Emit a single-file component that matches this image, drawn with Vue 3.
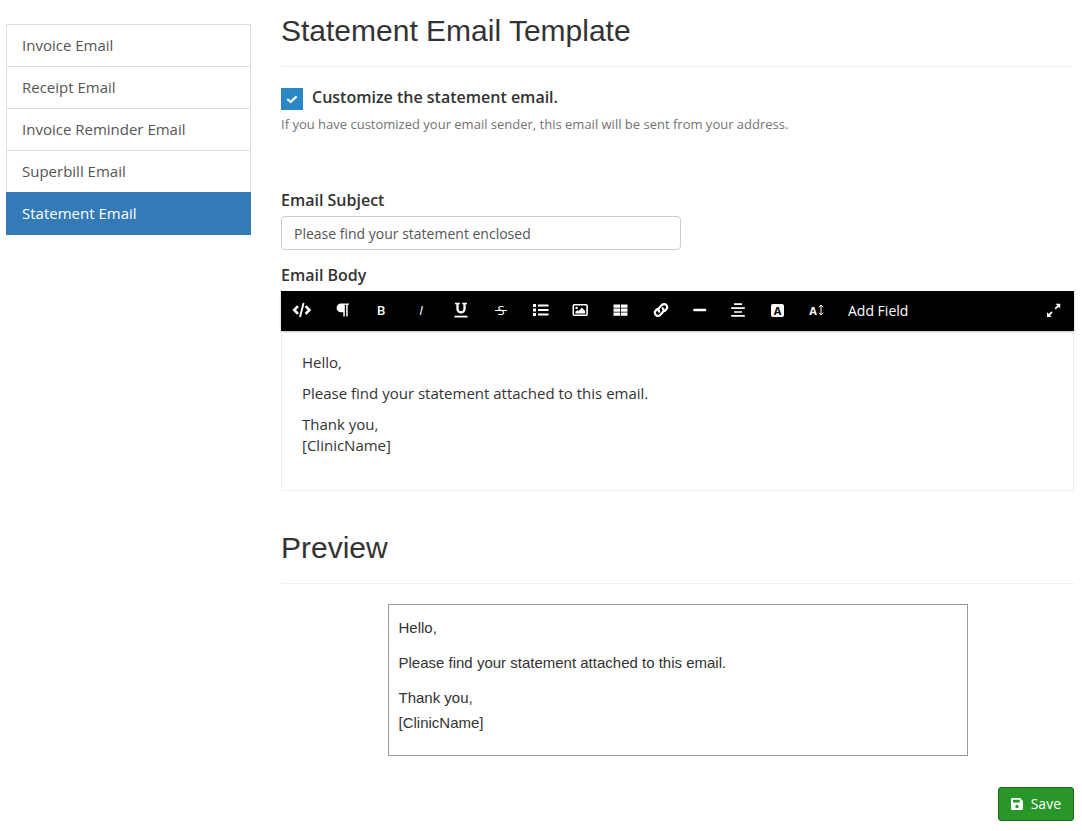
<script setup>
import { ref } from 'vue'

const templates = [
  'Invoice Email',
  'Receipt Email',
  'Invoice Reminder Email',
  'Superbill Email',
  'Statement Email',
]
const active = ref('Statement Email')
const customize = ref(true)
const subject = ref('Please find your statement enclosed')
</script>

<template>
  <div class="page">
    <nav class="sidebar" aria-label="Email templates">
      <a
        v-for="name in templates"
        :key="name"
        href="#"
        class="item"
        :class="{ active: name === active }"
        @click.prevent="active = name"
      >{{ name }}</a>
    </nav>

    <main class="content">
      <h1 class="title">Statement Email Template</h1>

      <div class="check-row">
        <input id="customize" v-model="customize" type="checkbox" class="check" />
        <svg class="tick" viewBox="0 0 22 22" aria-hidden="true">
          <path d="M6.300 11l3.300 3 6-5.600" fill="none" stroke="#fff" stroke-width="2.200" />
        </svg>
        <label for="customize" class="label">Customize the statement email.</label>
      </div>
      <p class="help">If you have customized your email sender, this email will be sent from your address.</p>

      <label for="subject" class="label field-label">Email Subject</label>
      <input id="subject" v-model="subject" type="text" class="text-input" />

      <div id="body-label" class="label field-label body-label">Email Body</div>
      <div class="editor">
        <div class="toolbar" role="toolbar" aria-label="Formatting">
          <button type="button" class="tool" aria-label="HTML">
            <svg viewBox="0 0 20 16"><path d="M7 4.200L3.200 8 7 11.800M14.600 4.200L18.400 8l-3.800 3.800" fill="none" stroke="#fff" stroke-width="2.600" /><path d="M12.600 1L9 15" stroke="#fff" stroke-width="1.900" /></svg>
          </button>
          <button type="button" class="tool" aria-label="Paragraph format">
            <svg viewBox="0 0 20 16"><path d="M10 1.500h8v1.300h-1.300V14.500h-1.500V2.800h-1.400V14.500h-1.500V10.300H10a4.400 4.400 0 0 1 0-8.800z" fill="#fff" /></svg>
          </button>
          <button type="button" class="tool bold">B</button>
          <button type="button" class="tool italic">I</button>
          <button type="button" class="tool" aria-label="Underline">
            <svg viewBox="0 0 20 16"><path d="M4 1.500h4.800M11.200 1.500H16" stroke="#fff" stroke-width="1.700" /><path d="M6.500 1.500v5.400a3.500 3.500 0 0 0 7 0V1.500" fill="none" stroke="#fff" stroke-width="2.300" /><path d="M3.500 14.600h13" stroke="#fff" stroke-width="1.800" /></svg>
          </button>
          <button type="button" class="tool" aria-label="Strikethrough"><span class="strike">S</span></button>
          <button type="button" class="tool" aria-label="Lists">
            <svg viewBox="0 0 20 16"><path d="M2 2h3v3H2zM2 6.500h3v3H2zM2 11h3v3H2zM7 2.500h10.500v2H7zM7 7h10.500v2H7zM7 11.500h10.500v2H7z" fill="#fff" /></svg>
          </button>
          <button type="button" class="tool" aria-label="Insert image">
            <svg viewBox="0 0 20 16"><rect x="2.300" y="2.700" width="13.800" height="10.600" rx="1" fill="none" stroke="#fff" stroke-width="1.600" /><circle cx="5.600" cy="5.900" r="1.200" fill="#fff" /><path d="M4.400 11.500V9.800l2-1.800 1.300 1 3.200-3.500 3.300 3.500v2.500z" fill="#fff" /></svg>
          </button>
          <button type="button" class="tool" aria-label="Insert table">
            <svg viewBox="0 0 20 16"><path d="M2.500 2.500h6.600v3.200H2.500zM9.900 2.500h6.600v3.200H9.900zM2.500 6.500h6.600v3.200H2.500zM9.900 6.500h6.600v3.200H9.900zM2.500 10.500h6.600v3.200H2.500zM9.900 10.500h6.600v3.200H9.900z" fill="#fff" /></svg>
          </button>
          <button type="button" class="tool" aria-label="Insert link">
            <svg viewBox="0 0 20 16"><g fill="none" stroke="#fff" stroke-width="2.200" stroke-linecap="round"><path d="M8.300 9.700a3 3 0 0 1 .1-4.100l2.500-2.500a3 3 0 0 1 4.400 0 3 3 0 0 1 0 4.300l-1.600 1.600" /><path d="M11.700 6.300a3 3 0 0 1-.1 4.100l-2.500 2.500a3 3 0 0 1-4.400 0 3 3 0 0 1 0-4.300L6.300 7" /></g></svg>
          </button>
          <button type="button" class="tool" aria-label="Insert horizontal rule">
            <svg viewBox="0 0 20 16"><path d="M4.300 8h10.800" stroke="#fff" stroke-width="2.400" stroke-linecap="round" /></svg>
          </button>
          <button type="button" class="tool" aria-label="Align text">
            <svg viewBox="0 0 20 16"><path d="M5 2.200h8M2.200 6.100h13.600M5 10h8M2.200 13.900h13.600" stroke="#fff" stroke-width="1.700" /></svg>
          </button>
          <button type="button" class="tool" aria-label="Text color"><span class="swatch">A</span></button>
          <button type="button" class="tool size" aria-label="Font size">
            <span>A</span>
            <svg class="updown" viewBox="0 0 6 12"><path d="M3 1v10M.8 3.300L3 1l2.200 2.300M.8 8.700L3 11l2.200-2.300" fill="none" stroke="#fff" stroke-width="1" /></svg>
          </button>
          <button type="button" class="tool add-field">Add Field</button>
          <button type="button" class="tool expand" aria-label="Fullscreen">
            <svg viewBox="0 0 20 16"><path d="M11.200 6.800l3.500-3.500M8 10l-3.500 3.500" stroke="#fff" stroke-width="1.800" /><path d="M11.500 1.800H16.200V6.500zM7.700 15H3V10.300z" fill="#fff" /></svg>
          </button>
        </div>
        <div class="editor-body" contenteditable="true" role="textbox" aria-multiline="true" aria-labelledby="body-label">
          <p>Hello,</p>
          <p>Please find your statement attached to this email.</p>
          <p>Thank you,<br />[ClinicName]</p>
        </div>
      </div>

      <h2 class="title preview-title">Preview</h2>
      <section class="preview">
        <p>Hello,</p>
        <p>Please find your statement attached to this email.</p>
        <p>Thank you,<br />[ClinicName]</p>
      </section>

      <div class="actions">
        <button type="button" class="save">
          <svg viewBox="0 0 12 12" aria-hidden="true"><path fill-rule="evenodd" d="M1.300 0H9l3 3v7.700a1.300 1.300 0 0 1-1.300 1.300H1.300A1.300 1.300 0 0 1 0 10.700V1.300A1.300 1.300 0 0 1 1.300 0zM2 1.700v2.800h6.800V1.700zM6 6.800a1.700 1.700 0 1 0 0 3.400 1.700 1.700 0 0 0 0-3.400z" fill="#fff" /></svg>
          <span>Save</span>
        </button>
      </div>
    </main>
  </div>
</template>

<style>
body {
  background: #fff;
}
</style>

<style scoped>
.page {
  display: grid;
  grid-template-columns: minmax(0, 245fr) minmax(0, 793fr);
  column-gap: 30px;
  align-items: start;
  padding: 0 8px 10px 6px;
  font-family: "Open Sans", "Noto Sans", sans-serif;
  font-size: 15px;
  line-height: 21px;
  color: #333;
}
.page *,
.page {
  box-sizing: border-box;
}
.sidebar {
  margin-top: 24px;
  border: 1px solid #ddd;
  border-bottom: 0;
}
.item {
  display: block;
  height: 42px;
  padding: 10px 15px;
  border-bottom: 1px solid #ddd;
  color: #555;
  text-decoration: none;
}
.item.active {
  margin: -1px -1px 0;
  height: 43px;
  padding: 11px 16px;
  border-bottom: 0;
  background: #337ab7;
  color: #fff;
}
.title {
  margin: 0 0 20px;
  padding: 14px 0 19px;
  border-bottom: 1px solid #eee;
  font-family: "Liberation Sans", Arial, sans-serif;
  font-size: 30px;
  font-weight: 400;
  line-height: 33px;
}
.label {
  font-size: 16px;
  font-weight: 600;
}
.check-row {
  display: grid;
  grid-template-columns: 22px 1fr;
  column-gap: 9px;
  align-items: start;
}
.check {
  grid-area: 1 / 1;
  appearance: none;
  width: 22px;
  height: 22px;
  margin: 1px 0 0;
  border: 1px solid #2a87c6;
  background: #fff;
}
.check:checked {
  background: #2a87c6;
}
.tick {
  grid-area: 1 / 1;
  width: 22px;
  height: 22px;
  margin-top: 1px;
  pointer-events: none;
}
.help {
  margin: 4px 0 0;
  font-size: 13px;
  color: #737373;
}
.field-label {
  display: block;
  margin: 55px 0 5px;
}
.text-input {
  display: block;
  width: 100%;
  max-width: 400px;
  height: 34px;
  padding: 6px 12px;
  border: 1px solid #ccc;
  border-radius: 4px;
  font-family: inherit;
  font-size: 14px;
  color: #555;
  background: #fff;
}
.body-label {
  margin-top: 15px;
}
.toolbar {
  display: flex;
  height: 40px;
  background: #000;
  box-shadow: 0 1px 2px rgba(0, 0, 0, 0.25);
}
.tool {
  display: flex;
  align-items: center;
  justify-content: center;
  flex: 0 1 auto;
  width: 40px;
  padding: 0 0 2px;
  border: 0;
  background: none;
  color: #fff;
  font-family: inherit;
  font-size: 14px;
}
.tool:nth-child(n + 10) {
  width: 39px;
}
.tool svg {
  width: 20px;
  height: 16px;
}
.bold {
  font-size: 13px;
  font-weight: 600;
}
.italic {
  font-size: 13px;
  font-style: italic;
}
.strike {
  display: block;
  position: relative;
  width: 12px;
  font-size: 13px;
}
.strike::after {
  content: "";
  position: absolute;
  left: 0;
  right: 0;
  top: 50%;
  height: 1px;
  background: #fff;
}
.swatch {
  width: 13px;
  height: 13px;
  border-radius: 2px;
  background: #fff;
  color: #000;
  font-size: 11px;
  font-weight: 700;
  line-height: 13px;
}
.size {
  gap: 1px;
  font-size: 11px;
  font-weight: 700;
}
.tool .updown {
  width: 6px;
  height: 12px;
}
.tool.add-field {
  width: auto;
  padding: 0 12px 2px;
}
.tool.expand {
  width: 40px;
  margin-left: auto;
}
.editor-body {
  min-height: 160px;
  padding: 21px 20px 20px;
  border: 1px solid #eee;
  border-top: 0;
}
.editor-body p {
  margin: 0 0 10px;
}
.preview-title {
  margin-top: 26px;
}
.preview {
  max-width: 580px;
  margin: 0 auto;
  padding: 10px;
  border: 1px solid #999;
  font-family: "Liberation Sans", Arial, sans-serif;
  line-height: 25px;
}
.preview p {
  margin: 0 0 10px;
}
.actions {
  display: flex;
  justify-content: flex-end;
  margin-top: 31px;
}
.save {
  display: flex;
  align-items: center;
  gap: 8px;
  height: 34px;
  padding: 0 12px 1px;
  border: 1px solid #1b6d1b;
  border-radius: 3px;
  background: #299629;
  color: #fff;
  font-family: inherit;
  font-size: 14px;
}
.save svg {
  width: 12px;
  height: 12px;
}
</style>
